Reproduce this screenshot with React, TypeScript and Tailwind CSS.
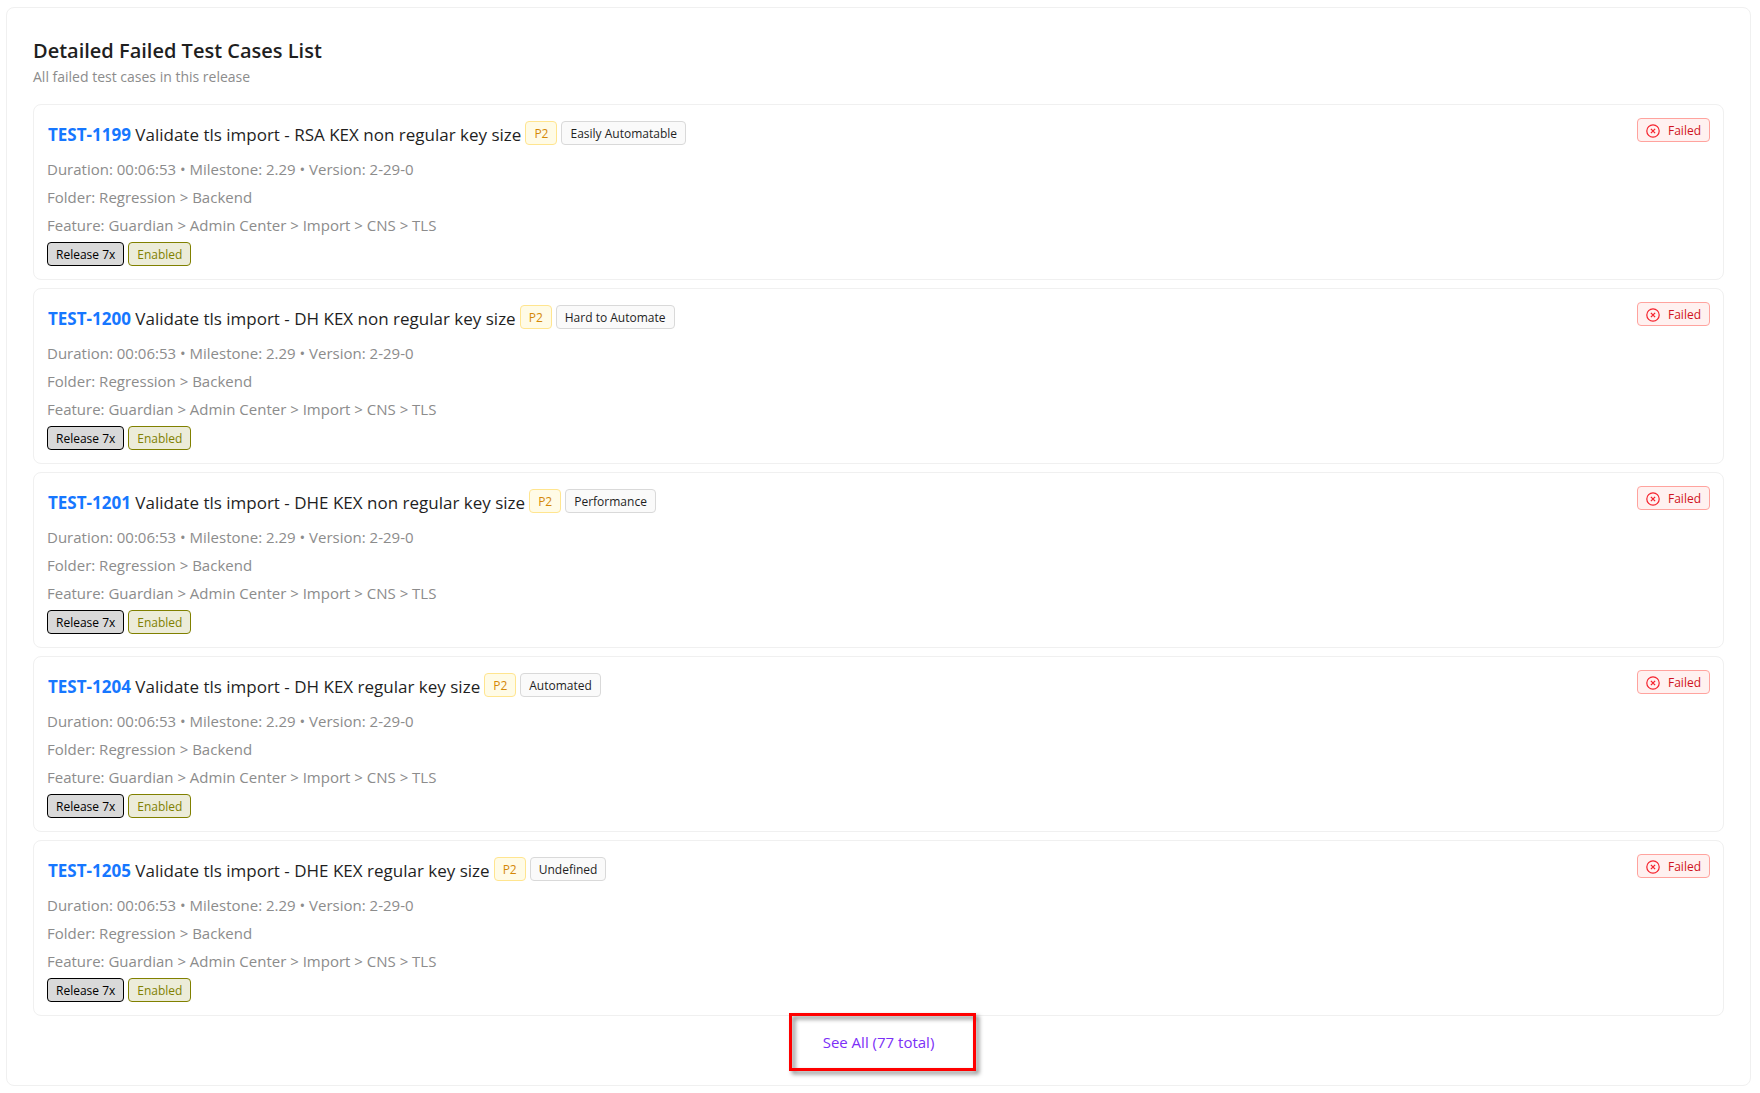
type TestCase = {
  id: string;
  title: string;
  automation: string;
};

const cases: TestCase[] = [
  { id: "TEST-1199", title: "Validate tls import - RSA KEX non regular key size", automation: "Easily Automatable" },
  { id: "TEST-1200", title: "Validate tls import - DH KEX non regular key size", automation: "Hard to Automate" },
  { id: "TEST-1201", title: "Validate tls import - DHE KEX non regular key size", automation: "Performance" },
  { id: "TEST-1204", title: "Validate tls import - DH KEX regular key size", automation: "Automated" },
  { id: "TEST-1205", title: "Validate tls import - DHE KEX regular key size", automation: "Undefined" },
];

function Tag({ className, children }: { className: string; children: React.ReactNode }) {
  return (
    <span className={`inline-flex h-6 shrink-0 items-center rounded border px-2 pt-px text-xs whitespace-nowrap ${className}`}>
      {children}
    </span>
  );
}

function CloseCircle() {
  return (
    <svg viewBox="0 0 14 14" className="size-3.5 text-[#f5222d]" fill="none" stroke="currentColor" aria-hidden="true">
      <circle cx="7" cy="7" r="6.2" strokeWidth="1.2" />
      <path d="M4.9 4.9l4.2 4.2M9.1 4.9L4.9 9.1" strokeWidth="1.3" />
    </svg>
  );
}

function CaseCard({ item }: { item: TestCase }) {
  return (
    <li className="flex items-start justify-between rounded-lg border border-[#f0f0f0] p-[13px]">
      <div className="min-w-0">
        <div className="flex h-[30px] items-center gap-1 pl-px">
          <h2 className="pt-1 text-[17px] whitespace-nowrap">
            <a href="#" className="font-bold text-[#1677ff]">{item.id}</a>{" "}
            {item.title}
          </h2>
          <Tag className="border-[#ffe58f] bg-[#fffbe6] text-[#d48806]">P2</Tag>
          <Tag className="border-[#d9d9d9] bg-[#fafafa]">{item.automation}</Tag>
        </div>
        <div className="pt-[7px] text-[15px] leading-7 text-[#8c8c8c]">
          <p>Duration: 00:06:53 • Milestone: 2.29 • Version: 2-29-0</p>
          <p>Folder: Regression &gt; Backend</p>
          <p>Feature: Guardian &gt; Admin Center &gt; Import &gt; CNS &gt; TLS</p>
        </div>
        <div className="mt-[3px] flex gap-1">
          <Tag className="border-black bg-[#d9d9d9] text-black">Release 7x</Tag>
          <Tag className="border-[#808000] bg-[#ececd9] text-[#808000]">Enabled</Tag>
        </div>
      </div>
      <Tag className="gap-2 border-[#ffa39e] bg-[#fff1f0] text-[#cf1322]">
        <CloseCircle />
        Failed
      </Tag>
    </li>
  );
}

export default function App() {
  return (
    <main className="px-1.5 py-[7px] font-['Open_Sans','Noto_Sans',sans-serif] text-[#1f1f1f]">
      <section className="mr-[3px] rounded-lg border border-[#f0f0f0] px-[26px] pt-[27px] pb-[23px]">
        <h1 className="text-xl leading-8 font-semibold">Detailed Failed Test Cases List</h1>
        <p className="text-sm leading-5 text-[#8c8c8c]">All failed test cases in this release</p>
        <ul className="mt-[17px] flex flex-col gap-2">
          {cases.map((item) => (
            <CaseCard key={item.id} item={item} />
          ))}
        </ul>
        <div className="mt-1.5 flex justify-center">
          <div className="relative">
            <button type="button" className="h-10 px-4 text-[15px] text-[#7b2ff7]">See All (77 total)</button>
            <div className="pointer-events-none absolute -top-[9px] -right-[26px] -bottom-[9px] -left-[18px] border-3 border-[#ff0000] drop-shadow-[3px_3px_2px_rgba(0,0,0,0.5)]" />
          </div>
        </div>
      </section>
    </main>
  );
}
